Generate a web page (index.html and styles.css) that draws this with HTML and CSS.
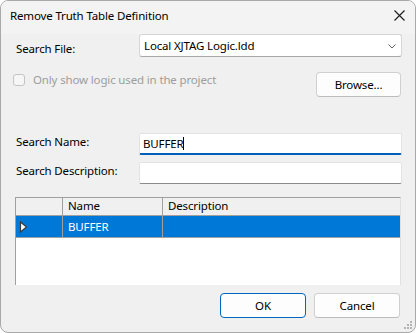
FILE: index.html
```html
<!DOCTYPE html>
<html lang="en">
<head>
    <meta charset="UTF-8">
    <title>Remove Truth Table Definition</title>
    <link rel="stylesheet" href="styles.css">
</head>
<body>
    <div class="window">
        <div class="titlebar">
            <span class="title">Remove Truth Table Definition</span>
            <svg class="close" width="11" height="11" viewBox="0 0 11 11">
                <path d="M0.5 0.5 L10.5 10.5 M10.5 0.5 L0.5 10.5" stroke="#1a1a1a" stroke-width="1.1" fill="none"/>
            </svg>
        </div>

        <div class="dialog-body">
            <div class="row row-file">
                <span class="label label-file">Search File:</span>
                <div class="combo">
                    <span>Local XJTAG Logic.ldd</span>
                    <svg class="chevron" width="8" height="5" viewBox="0 0 8 5">
                        <path d="M0.5 0.5 L4 4 L7.5 0.5" stroke="#5f5f5f" stroke-width="1" fill="none"/>
                    </svg>
                </div>
            </div>

            <div class="row row-options">
                <span class="check"><span class="box"></span>Only show logic used in the project</span>
                <button class="btn btn-browse">Browse...</button>
            </div>

            <div class="row row-name">
                <span class="label">Search Name:</span>
                <div class="input input-focus">BUFFER<span class="caret"></span></div>
            </div>

            <div class="row row-desc">
                <span class="label">Search Description:</span>
                <div class="input"></div>
            </div>

            <div class="grid">
                <div class="grid-head">
                    <div class="cell cell-marker"></div>
                    <div class="cell cell-name">Name</div>
                    <div class="cell cell-desc">Description</div>
                </div>
                <div class="grid-row selected">
                    <div class="cell cell-marker">
                        <svg width="9" height="12" viewBox="0 0 9 12">
                            <path d="M1.5 1 L7.5 6 L1.5 11 Z" fill="#ffffff" stroke="#3a3a3a" stroke-width="1.2" stroke-linejoin="miter"/>
                        </svg>
                    </div>
                    <div class="cell cell-name">BUFFER</div>
                    <div class="cell cell-desc"></div>
                </div>
            </div>

            <div class="actions">
                <button class="btn btn-ok">OK</button>
                <button class="btn">Cancel</button>
            </div>
        </div>

        <svg class="grip" width="9" height="9" viewBox="0 0 9 9">
            <rect x="6" y="0" width="2" height="2" fill="#b4b4b4"/>
            <rect x="3" y="3" width="2" height="2" fill="#b4b4b4"/>
            <rect x="6" y="3" width="2" height="2" fill="#b4b4b4"/>
            <rect x="0" y="6" width="2" height="2" fill="#b4b4b4"/>
            <rect x="3" y="6" width="2" height="2" fill="#b4b4b4"/>
            <rect x="6" y="6" width="2" height="2" fill="#b4b4b4"/>
        </svg>
    </div>
</body>
</html>
```

FILE: styles.css
```css
body {
    margin: 0;
    padding: 0;
    background: #ffffff;
    font-family: 'Noto Sans', 'Open Sans', sans-serif;
    font-size: 11.5px;
    letter-spacing: -0.15px;
    line-height: 16px;
    color: #000000;
}

.window {
    position: relative;
    box-sizing: border-box;
    width: 416px;
    height: 333px;
    border: 1px solid #a9a9a9;
    border-radius: 8px;
    background: #f0f0f0;
    overflow: hidden;
}

.titlebar {
    display: flex;
    justify-content: space-between;
    align-items: flex-start;
    height: 33px;
    box-sizing: border-box;
    padding: 7px 10px 0 9px;
    background: #f3f3f3;
}

.close {
    margin-top: 2px;
}

.dialog-body {
    padding: 0 13px 0 15px;
}

.row {
    display: flex;
    align-items: flex-start;
}

.label {
    width: 123px;
    flex-shrink: 0;
}

.label-file {
    margin-top: 7px;
}

/* combo box */
.row-file {
    height: 23px;
}

.combo {
    flex: 1;
    height: 23px;
    box-sizing: border-box;
    display: flex;
    justify-content: space-between;
    align-items: center;
    padding: 0 5px 0 4px;
    background: #ffffff;
    border: 1px solid #d6d6d6;
    border-bottom-color: #a8a8a8;
    border-radius: 3px;
}

.chevron {
    margin-top: 1px;
}

/* checkbox + browse */
.row-options {
    margin-top: 15px;
    justify-content: space-between;
    height: 25px;
}

.check {
    display: flex;
    align-items: flex-start;
    margin-left: -3px;
    color: #9d9d9d;
}

.box {
    width: 12px;
    height: 12px;
    box-sizing: border-box;
    margin: 2px 8px 0 0;
    border: 1px solid #c4c4c4;
    border-radius: 3px;
    background: #f6f6f6;
}

.btn {
    font-family: inherit;
    font-size: 11.5px;
    letter-spacing: -0.15px;
    line-height: 16px;
    color: #000000;
    height: 25px;
    width: 86px;
    padding: 0;
    box-sizing: border-box;
    background: #fdfdfd;
    border: 1px solid #d0d0d0;
    border-bottom-color: #bcbcbc;
    border-radius: 4px;
}

.btn-browse {
    width: 85px;
    margin-right: 1px;
}

.btn-ok {
    border-color: #0067c0;
}

/* text boxes */
.row-name {
    margin-top: 36px;
    height: 22px;
}

.row-name .label {
    margin-top: 1px;
}

.row-desc {
    margin-top: 7px;
    height: 22px;
}

.row-desc .label {
    margin-top: 1px;
}

.input {
    flex: 1;
    height: 22px;
    box-sizing: border-box;
    padding: 2px 3px 0 3px;
    background: #ffffff;
    border: 1px solid #e3e3e3;
    border-bottom-color: #8a8a8a;
    border-radius: 2px;
}

.input-focus {
    border-bottom: 2px solid #005fb8;
}

.caret {
    display: inline-block;
    width: 1px;
    height: 13px;
    background: #000000;
    vertical-align: -2px;
}

/* data grid */
.grid {
    margin: 13px 1px 0 -1px;
    height: 87px;
    background: #ffffff;
    border-left: 1px solid #a0a0a0;
    border-top: 1px solid #a0a0a0;
    border-right: 1px solid #e0e0e0;
}

.grid-head,
.grid-row {
    display: flex;
}

.grid-head {
    height: 17px;
    background: #f0f0f0;
    border-bottom: 1px solid #a0a0a0;
}

.grid-row {
    height: 21px;
    border-bottom: 1px solid #a0a0a0;
}

.cell {
    box-sizing: border-box;
    padding-left: 5px;
    border-right: 1px solid #a0a0a0;
}

.cell-marker {
    width: 47px;
}

.cell-name {
    width: 100px;
}

.cell-desc {
    flex: 1;
    border-right: none;
}

.grid-row .cell {
    line-height: 21px;
}

.grid-row .cell-marker svg {
    display: block;
    margin: 5px 0 0 -2px;
}

.selected {
    background: #0078d7;
    color: #ffffff;
}

/* bottom buttons */
.actions {
    display: flex;
    justify-content: flex-end;
    gap: 8px;
    margin: 8px 2px 0 0;
}

.grip {
    position: absolute;
    right: 2px;
    bottom: 2px;
}
```
